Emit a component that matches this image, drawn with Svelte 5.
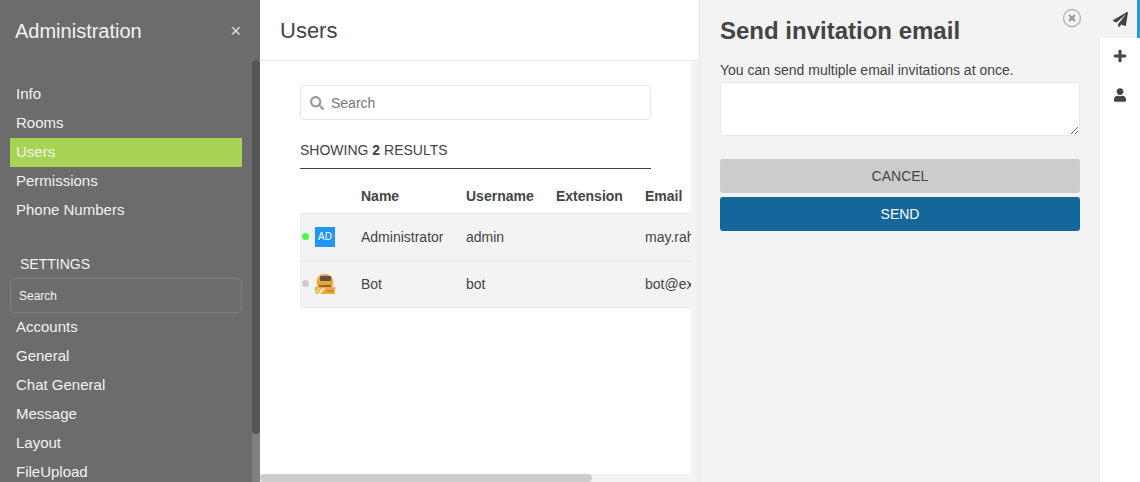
<script>
  const roomItems = ['Info', 'Rooms', 'Users', 'Permissions', 'Phone Numbers'];
  const settingItems = ['Accounts', 'General', 'Chat General', 'Message', 'Layout', 'FileUpload', 'LDAP'];
  const users = [
    { name: 'Administrator', username: 'admin', email: 'may.rahman@example.com', online: true, initials: 'AD' },
    { name: 'Bot', username: 'bot', email: 'bot@example.com', online: false }
  ];
</script>

<div class="page">
  <aside class="sidebar">
    <header class="side-head">
      <h1>Administration</h1>
      <span class="side-close">×</span>
    </header>
    <div class="side-body">
      <div class="side-scroll">
        <ul class="side-list">
          {#each roomItems as item}
            <li class:active={item === 'Users'}>{item}</li>
          {/each}
        </ul>
        <h3 class="side-title">SETTINGS</h3>
        <input class="side-search" type="text" placeholder="Search" />
        <ul class="side-list">
          {#each settingItems as item}
            <li>{item}</li>
          {/each}
        </ul>
      </div>
      <div class="side-track"><div class="side-thumb"></div></div>
    </div>
  </aside>

  <main class="main">
    <header class="main-head"><h2>Users</h2></header>
    <div class="main-scroll">
      <div class="main-view">
        <div class="main-inner">
          <label class="search">
            <svg width="14" height="14" viewBox="0 0 512 512" aria-hidden="true">
              <path fill="currentColor" fill-rule="evenodd" d="M505 442.700L405.300 343c-4.500-4.500-10.600-7-17-7H372c27.600-35.300 44-79.700 44-128C416 93.100 322.900 0 208 0S0 93.100 0 208s93.100 208 208 208c48.300 0 92.700-16.400 128-44v16.300c0 6.400 2.500 12.500 7 17l99.700 99.700c9.400 9.400 24.600 9.400 33.900 0l28.300-28.300c9.400-9.400 9.400-24.600.1-34zM208 336c-70.700 0-128-57.200-128-128 0-70.700 57.200-128 128-128 70.700 0 128 57.200 128 128 0 70.700-57.200 128-128 128z"/>
            </svg>
            <input type="text" placeholder="Search" />
          </label>
          <div class="results">SHOWING <b>2</b> RESULTS</div>
          <table>
            <thead>
              <tr>
                <th class="c-avatar"></th>
                <th class="c-name">Name</th>
                <th class="c-user">Username</th>
                <th class="c-ext">Extension</th>
                <th>Email</th>
              </tr>
            </thead>
            <tbody>
              {#each users as user}
                <tr>
                  <td class="c-avatar">
                    <div class="who">
                      <span class="dot" class:online={user.online}></span>
                      {#if user.initials}
                        <span class="avatar">{user.initials}</span>
                      {:else}
                        <!-- Bot avatar -->
                        <svg class="bot" width="20" height="20" viewBox="0 0 20 20" aria-hidden="true">
                          <rect width="20" height="20" fill="#f7f3ea"/>
                          <path d="M0 20v-7h20v7z" fill="#f2a83a"/>
                          <path d="M2 7c0-4 3-7 8-7s8 3 8 7v4c0 1.500-1 2-2 2H4c-1 0-2-.5-2-2z" fill="#f0a436"/>
                          <path d="M2 20l5-6h3.500l-5 6zM0 18l3.500-4H5l-5 6z" fill="#fbe3bb"/>
                          <rect x="5" y="2" width="11" height="5" rx="1" fill="#5a5348"/>
                          <rect x="4" y="11" width="12" height="2" fill="#8a6a34"/>
                          <rect x="12" y="16" width="6" height="2" fill="#b98a44"/>
                        </svg>
                      {/if}
                    </div>
                  </td>
                  <td>{user.name}</td>
                  <td>{user.username}</td>
                  <td></td>
                  <td>{user.email}</td>
                </tr>
              {/each}
            </tbody>
          </table>
        </div>
      </div>
      <div class="v-track"></div>
      <div class="h-track"><div class="h-thumb"></div></div>
      <div class="corner"></div>
    </div>
  </main>

  <section class="flex-panel">
    <button type="button" class="panel-close" aria-label="Close">
      <svg width="20" height="20" viewBox="0 0 20 20" aria-hidden="true">
        <circle cx="10" cy="10" r="8.500" fill="none" stroke="#b3b3b3" stroke-width="1.300"/>
        <path d="M7 7l6 6M13 7l-6 6" stroke="#9a9a9a" stroke-width="2.400"/>
      </svg>
    </button>
    <h2>Send invitation email</h2>
    <p>You can send multiple email invitations at once.</p>
    <textarea></textarea>
    <button type="button" class="btn cancel">CANCEL</button>
    <button type="button" class="btn send">SEND</button>
  </section>

  <nav class="tabs">
    <button type="button" class="tab active" aria-label="Invite">
      <svg width="15" height="15" viewBox="0 0 512 512" aria-hidden="true">
        <path fill="currentColor" d="M476 3.200L12.500 270.600c-18.100 10.400-15.800 35.600 2.200 43.200L121 358.400l287.300-253.200c5.500-4.900 13.300 2.600 8.600 8.300L176 407v80.500c0 23.600 28.500 32.900 42.500 15.800L282 426l124.600 52.200c14.200 6 30.400-2.900 33-18.200l72-432C515 7.800 493.300-6.800 476 3.200z"/>
      </svg>
    </button>
    <button type="button" class="tab plus" aria-label="Add user">
      <svg width="12" height="12" viewBox="0 0 12 12" aria-hidden="true">
        <path fill="currentColor" d="M4.500 0h3v4.500H12v3H7.500V12h-3V7.500H0v-3h4.500z"/>
      </svg>
    </button>
    <button type="button" class="tab" aria-label="User">
      <svg width="12" height="14" viewBox="0 0 448 512" aria-hidden="true">
        <path fill="currentColor" d="M224 256c70.700 0 128-57.300 128-128S294.700 0 224 0 96 57.300 96 128s57.300 128 128 128zm89.600 32h-16.700c-22.200 10.200-46.900 16-72.900 16s-50.600-5.800-72.900-16h-16.700C60.200 288 0 348.200 0 422.400V464c0 26.500 21.500 48 48 48h352c26.500 0 48-21.500 48-48v-41.600c0-74.200-60.200-134.400-134.400-134.400z"/>
      </svg>
    </button>
  </nav>
</div>

<style>
  :global(body) {
    margin: 0;
    overflow: hidden;
    font-family: "Liberation Sans", Arial, sans-serif;
    color: #444;
  }
  .page {
    display: flex;
    height: 482px;
    width: 1140px;
    overflow: hidden;
    background: #fff;
  }

  .sidebar {
    flex: 0 0 260px;
    display: flex;
    flex-direction: column;
    background: #6c6c6c;
    color: #f2f2f2;
    min-height: 0;
  }
  .side-head {
    flex: 0 0 60px;
    display: flex;
    align-items: center;
    justify-content: space-between;
    box-sizing: border-box;
    padding: 2px 19px 0 15px;
  }
  .side-head h1 {
    margin: 0;
    font-size: 20px;
    font-weight: 400;
  }
  .side-close {
    font-size: 18px;
    color: #e0e0e0;
  }
  .side-body {
    flex: 1;
    min-height: 0;
    display: flex;
  }
  .side-scroll {
    flex: 1;
    min-width: 0;
    overflow: hidden;
    padding: 20px 10px 0;
  }
  .side-track {
    flex: 0 0 8px;
    background: #808080;
  }
  .side-thumb {
    height: 374px;
    background: #555;
    border-radius: 4px;
  }
  .side-list {
    list-style: none;
    margin: 0;
    padding: 0;
  }
  .side-list li {
    height: 29px;
    line-height: 27px;
    font-size: 15px;
    padding-left: 6px;
  }
  .side-list li.active { background: #a7d455; }
  .side-title {
    margin: 0;
    padding: 31px 0 5px 10px;
    font-size: 14px;
    font-weight: 400;
    line-height: 17px;
    height: 17px;
  }
  .side-search {
    display: block;
    box-sizing: border-box;
    width: 232px;
    height: 35px;
    padding: 0 8px;
    background: transparent;
    border: 1px solid #808080;
    border-radius: 5px;
    color: #f2f2f2;
    font: 12px "Liberation Sans", Arial, sans-serif;
  }
  .side-search::placeholder { color: #f2f2f2; opacity: 1; }

  .main {
    flex: 1;
    min-width: 0;
    display: flex;
    flex-direction: column;
  }
  .main-head {
    flex: 0 0 60px;
    display: flex;
    align-items: center;
    box-sizing: border-box;
    padding: 2px 0 0 20px;
  }
  .main-head h2 {
    margin: 0;
    font-size: 22px;
    font-weight: 400;
  }
  .main-scroll {
    flex: 1;
    min-height: 0;
    display: grid;
    grid-template-columns: 1fr 8px;
    grid-template-rows: 1fr 8px;
    border-top: 1px solid #e7e7e7;
  }
  .main-view {
    overflow: hidden;
    min-width: 0;
    min-height: 0;
  }
  .v-track, .h-track, .corner { background: #f3f3f3; }
  .h-thumb {
    width: 332px;
    height: 8px;
    background: #ccc;
    border-radius: 4px;
  }
  .main-inner {
    box-sizing: border-box;
    width: 560px;
    padding: 24px 0 0 40px;
  }
  .search {
    box-sizing: border-box;
    width: 351px;
    height: 35px;
    display: flex;
    align-items: center;
    gap: 7px;
    padding: 0 9px;
    border: 1px solid #e7e7e7;
    border-radius: 4px;
    color: #a09c98;
  }
  .search input {
    flex: 1;
    min-width: 0;
    border: 0;
    outline: 0;
    padding: 0;
    font: 14px "Liberation Sans", Arial, sans-serif;
    color: #444;
  }
  .search input::placeholder { color: #777; opacity: 1; }
  .results {
    box-sizing: border-box;
    width: 351px;
    height: 49px;
    padding-top: 22px;
    line-height: 16px;
    font-size: 14px;
    border-bottom: 1px solid #444;
  }
  table {
    width: 520px;
    border-collapse: collapse;
    table-layout: fixed;
    font-size: 14px;
  }
  th {
    height: 44px;
    padding: 11px 0 0;
    text-align: left;
    font-weight: 700;
    box-sizing: border-box;
  }
  td {
    height: 47px;
    padding: 0;
    box-sizing: border-box;
    background: #f3f3f3;
    border-top: 1px solid #e7e7e7;
    border-bottom: 1px solid #e7e7e7;
    white-space: nowrap;
    overflow: hidden;
  }
  .c-avatar { width: 61px; }
  .c-name { width: 105px; }
  .c-user { width: 90px; }
  .c-ext { width: 89px; }
  .who {
    display: flex;
    align-items: center;
    gap: 6px;
    padding-left: 2px;
  }
  .dot {
    width: 7px;
    height: 7px;
    border-radius: 50%;
    background: #ccc;
  }
  .dot.online { background: #4f4; }
  .avatar {
    width: 20px;
    height: 20px;
    background: #2196f3;
    color: #fff;
    font-size: 10px;
    line-height: 20px;
    text-align: center;
  }
  .bot { display: block; }

  .flex-panel {
    flex: 0 0 401px;
    box-sizing: border-box;
    position: relative;
    display: flex;
    flex-direction: column;
    padding: 0 20px;
    background: #f3f3f3;
    border-left: 1px solid #e7e7e7;
  }
  .flex-panel h2 {
    margin: 17px 0 0;
    font-size: 24px;
    line-height: 28px;
    font-weight: 700;
  }
  .flex-panel p {
    margin: 17px 0 0;
    font-size: 14px;
    line-height: 16px;
  }
  .panel-close {
    position: absolute;
    top: 8px;
    right: 18px;
    padding: 0;
    border: 0;
    background: none;
    line-height: 0;
  }
  textarea {
    box-sizing: border-box;
    display: block;
    width: 360px;
    height: 54px;
    margin: 4px 0 23px;
    border: 1px solid #e7e7e7;
    border-radius: 4px;
    background: #fff;
    resize: vertical;
    outline: 0;
  }
  .btn {
    width: 360px;
    height: 34px;
    padding: 0;
    border: 0;
    border-radius: 3px;
    font: 14px "Liberation Sans", Arial, sans-serif;
  }
  .cancel { background: #ccc; color: #444; margin-bottom: 4px; }
  .send { background: #13679a; color: #fff; }

  .tabs {
    flex: 0 0 40px;
    display: flex;
    flex-direction: column;
    background: #fff;
  }
  .tab {
    box-sizing: border-box;
    height: 38px;
    padding: 0;
    border: 0;
    background: none;
    color: #444;
    display: flex;
    align-items: center;
    justify-content: center;
  }
  .tab.plus { padding-bottom: 2px; }
  .tab.active {
    background: #f3f3f3;
    border-right: 3px solid #1d9ce4;
    padding-left: 3px;
  }
</style>
